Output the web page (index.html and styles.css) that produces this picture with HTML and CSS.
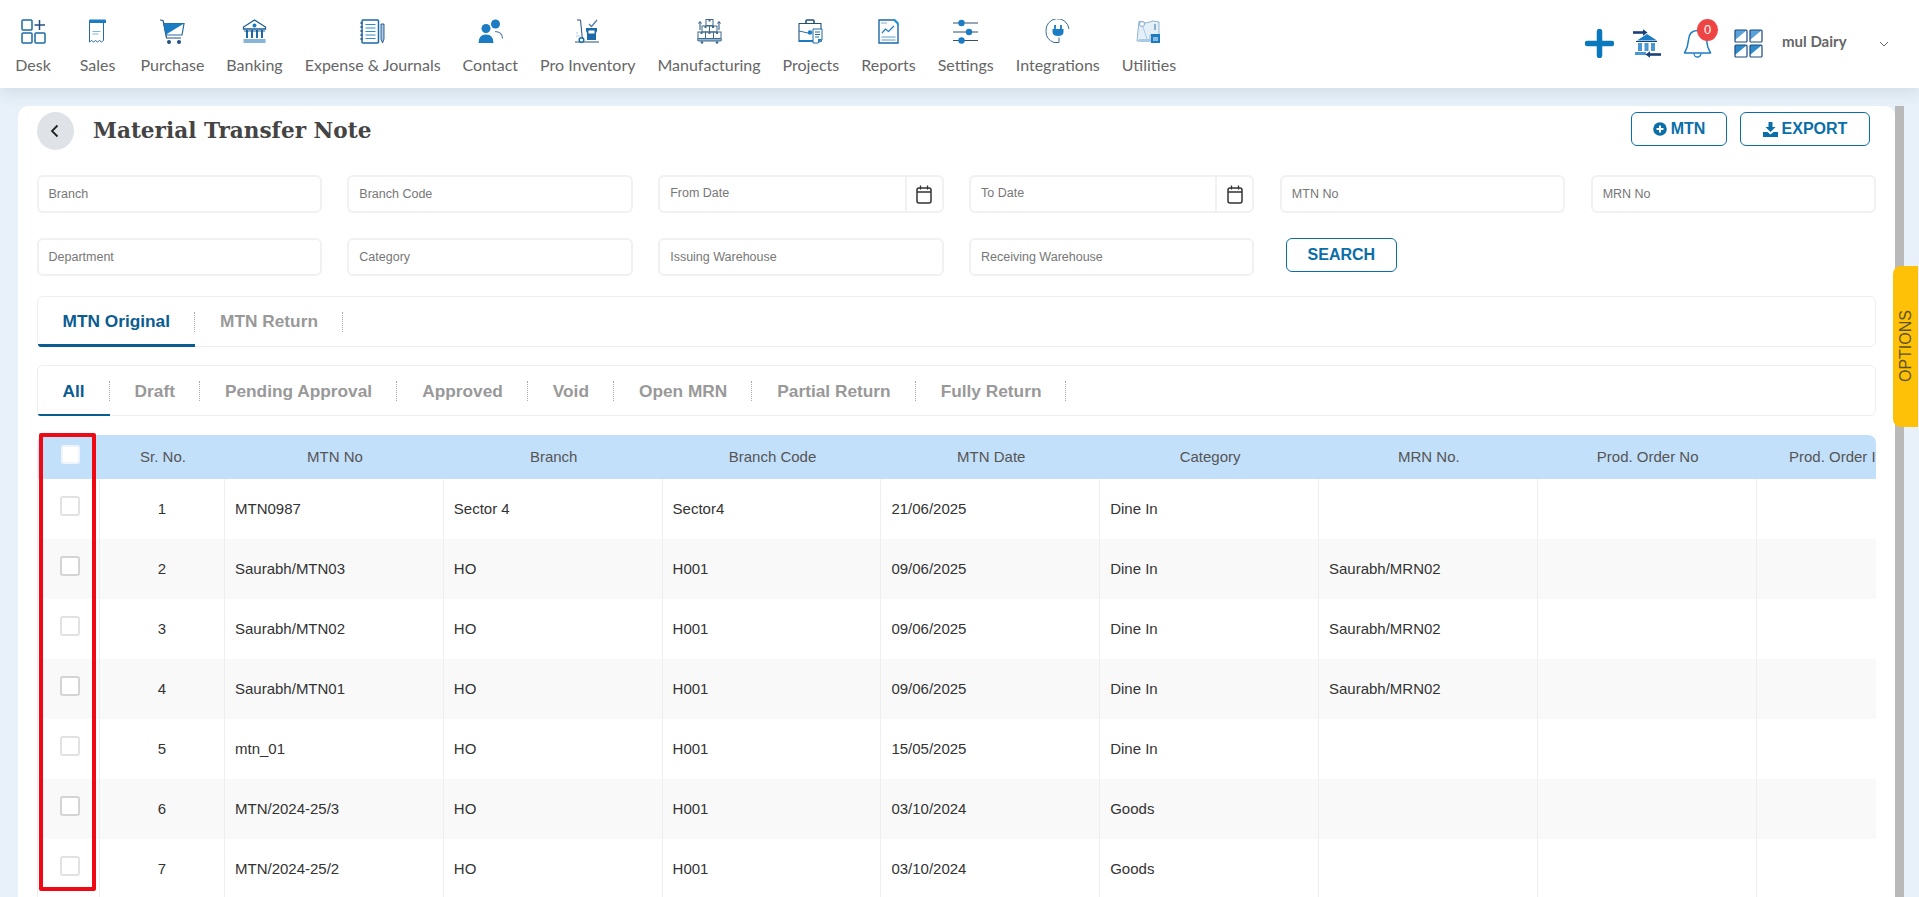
FILE: index.html
```html
<!DOCTYPE html>
<html lang="en">
<head>
<meta charset="utf-8">
<title>Material Transfer Note</title>
<link rel="stylesheet" href="styles.css">
</head>
<body>
<header class="topbar">
  <nav class="nav">
    <a class="nav-item nav-first"><svg class="nav-icon" viewBox="0 0 25 25"><g fill="none" stroke="#1c6aa8" stroke-width="1.5"><rect x="1" y="1" width="10" height="10" rx="1"/><rect x="1" y="14" width="10" height="10" rx="1"/><rect x="14" y="14" width="10" height="10" rx="1"/><path d="M18.500 1v10M13.500 6h10.500" stroke="#24507f"/></g></svg><span>Desk</span></a>
    <a class="nav-item"><svg class="nav-icon" viewBox="0 0 25 25"><path d="M4.500 3v20l2-1.500 2 1.500 2-1.500 2 1.500 2-1.500 2 1.500 2-1.500V3" fill="#fff" stroke="#2a6a9f" stroke-width="1"/><path d="M4 4V1.500Q4 .5 5 .5h15q1 0 1 1V4z" fill="#1b7cc4"/><path d="M7.500 12.500h8M7.500 15h6" stroke="#7fb6de" stroke-width="1.200"/></svg><span>Sales</span></a>
    <a class="nav-item"><svg class="nav-icon" viewBox="0 0 25 25"><path d="M0 1l3 .5L6.500 19H21" fill="none" stroke="#24507f" stroke-width="1.200"/><path d="M4 4.500h20L22 16H6.300z" fill="#fff" stroke="#2a6a9f" stroke-width="1.200"/><path d="M4 4.500h20L6 15.500z" fill="#1b7cc4"/><circle cx="9" cy="23" r="2" fill="#24507f"/><circle cx="19" cy="23" r="2" fill="#24507f"/></svg><span>Purchase</span></a>
    <a class="nav-item"><svg class="nav-icon" viewBox="0 0 25 25"><path d="M12.500 1L1.500 8v2h22V8z" fill="#fff" stroke="#1c5d94" stroke-width="1.300"/><circle cx="12.500" cy="6.500" r="2" fill="#1b7cc4"/><path d="M5 11v8M10 11v8M15 11v8M20 11v8" stroke="#1c6aa8" stroke-width="2"/><path d="M2 12h21" stroke="#1c5d94"/><rect x="1.500" y="20" width="22" height="4" fill="#86b4da"/></svg><span>Banking</span></a>
    <a class="nav-item"><svg class="nav-icon" viewBox="0 0 25 25"><rect x="2" y="1" width="16.500" height="23" rx="1" fill="#fff" stroke="#1c6aa8" stroke-width="1.500"/><path d="M5.500 5.500h10M5.500 9h10M5.500 12.500h10M5.500 16h10M5.500 19.500h10" stroke="#2f8ccb" stroke-width="1.200"/><path d="M0 4h3M0 8h3M0 12h3M0 16h3M0 20h3" stroke="#24507f"/><path d="M21 5h3v15l-1.500 4-1.500-4z" fill="#a9cbe8" stroke="#24507f" stroke-width=".9"/></svg><span>Expense &amp; Journals</span></a>
    <a class="nav-item"><svg class="nav-icon" viewBox="0 0 25 25"><circle cx="17.500" cy="5" r="4.500" fill="#1b7cc4"/><circle cx="8" cy="9.500" r="4.500" fill="#1b7cc4"/><path d="M.5 24q0-8.500 7.500-8.500T15.500 24z" fill="#1b7cc4"/><path d="M17 12.500q7 0 7.500 7" fill="none" stroke="#4a7aa5" stroke-width="1.100"/></svg><span>Contact</span></a>
    <a class="nav-item"><svg class="nav-icon" viewBox="0 0 25 25"><path d="M2 1h3.500l2 20" fill="none" stroke="#24507f"/><path d="M0 23h24" stroke="#24507f"/><circle cx="6.500" cy="21" r="2.300" fill="#fff" stroke="#1b6aa8" stroke-width="1.500"/><path d="M11 9h11v3l-1 2v7H12v-7l-1-2z" fill="#1c6aa8"/><rect x="13.500" y="11.500" width="6" height="3" fill="#fff"/><path d="M14 5l2.500 2.500L22 1" fill="none" stroke="#4a7aa5" stroke-width="1.200"/><path d="M1 17h4M1 14h2" stroke="#a9cbe8"/></svg><span>Pro Inventory</span></a>
    <a class="nav-item"><svg class="nav-icon" viewBox="0 0 25 25"><g fill="none" stroke="#3e6a8e" stroke-width="1"><rect x="9" y=".5" width="7" height="6"/><rect x="5" y="7" width="7.500" height="6"/><rect x="12.500" y="7" width="7.500" height="6"/><rect x="1" y="13" width="7.500" height="6.500"/><rect x="8.500" y="13" width="8" height="6.500"/><rect x="16.500" y="13" width="7.500" height="6.500"/><rect x=".5" y="19.500" width="24" height="2.500" rx="1.200" fill="#8fb4d2"/><path d="M3 11V3M1.500 4.500L3 2.500l1.500 2M22 11V3M20.500 4.500L22 2.500l1.500 2" stroke="#24507f"/></g><circle cx="5" cy="23.500" r="1.300" fill="#3e6a8e"/><circle cx="20" cy="23.500" r="1.300" fill="#3e6a8e"/><path d="M11.500.5h2v2h-2zM7.500 7h2v2h-2zM15 7h2v2h-2zM3.500 13h2v2h-2zM11.500 13h2v2h-2zM19 13h2v2h-2z" fill="#3e6a8e"/></svg><span>Manufacturing</span></a>
    <a class="nav-item"><svg class="nav-icon" viewBox="0 0 25 25"><path d="M8 4V2q0-1 1-1h6q1 0 1 1v2" fill="none" stroke="#24507f" stroke-width="1.600"/><path d="M1 4.500h22v18H1z" fill="#fff" stroke="#24507f" stroke-width="1.100"/><path d="M1 12l9 2M23 12l-8 2" stroke="#2a6a9f"/><circle cx="12" cy="13.500" r="2.200" fill="#1b7cc4"/><path d="M1 21h14v2H1z" fill="#1b7cc4"/><path d="M15 10h9v11l-4 3h-5z" fill="#fff" stroke="#1c6aa8"/><path d="M17 13h5M17 15.500h5M17 18h4" stroke="#1c6aa8"/><path d="M20 24l4-4h-4z" fill="#1b7cc4"/></svg><span>Projects</span></a>
    <a class="nav-item"><svg class="nav-icon" viewBox="0 0 25 25"><path d="M3 1h15l4 4v19H3z" fill="#fff" stroke="#1c6aa8" stroke-width="1.400"/><path d="M5 4h6" stroke="#7fa9cc"/><path d="M6 14l3.500-4 3 2.500L18 7" fill="none" stroke="#1b7cc4" stroke-width="1.200"/><path d="M5.500 18h14M5.500 21h14" stroke="#5a9ccc"/><path d="M17 1h2l3 3v3" fill="none" stroke="#1b9ad6" stroke-width="1.500"/></svg><span>Reports</span></a>
    <a class="nav-item"><svg class="nav-icon" viewBox="0 0 25 25"><path d="M0 4h25M0 13h25M0 21.500h25" stroke="#33506e" stroke-width="1.100"/><circle cx="8.500" cy="4" r="3.200" fill="#1b7cc4"/><circle cx="16" cy="13" r="3.200" fill="#1b7cc4"/><circle cx="8.500" cy="21.500" r="3.200" fill="#1b7cc4"/></svg><span>Settings</span></a>
    <a class="nav-item"><svg class="nav-icon" viewBox="0 0 25 25"><path d="M24 10A11.500 11.500 0 0 0 1 12.500q0 8 8 11h5v-5" fill="none" stroke="#3a6d99" stroke-width="1"/><path d="M10 6v4M16 6v4" stroke="#1b7cc4" stroke-width="1.800"/><path d="M7.500 10h11v3q0 4-5.500 4t-5.500-4z" fill="#1b7cc4"/></svg><span>Integrations</span></a>
    <a class="nav-item"><svg class="nav-icon" viewBox="0 0 25 25"><path d="M3 2l7 2 7-2 6 1v13h-9v6H1z" fill="#e4eff8" stroke="#8fb4d2"/><circle cx="6" cy="5" r="2.500" fill="#fff" stroke="#7fa9cc"/><path d="M19 5v6" stroke="#6f9cc2" stroke-width="1.500"/><path d="M3 20h14v3H3z" fill="#a9cbe8"/><rect x="15" y="15" width="9" height="9" fill="#1b7cc4"/><path d="M17 19h5M17 21h5" stroke="#fff"/><path d="M7 8l4 12" stroke="#a9cbe8"/></svg><span>Utilities</span></a>
  </nav>
  <div class="top-tools">
    <svg class="tool-plus" viewBox="0 0 29 29"><path d="M14.500 2.500v24M2.500 14.500h24" stroke="#0a78bd" stroke-width="5.500" stroke-linecap="round"/></svg>
    <svg class="tool-bank" viewBox="0 0 29 29"><path d="M1 3.500h11" stroke="#1c3f78" stroke-width="2.600"/><path d="M11 .3l4.500 3.200L11 6.700z" fill="#1c3f78"/><path d="M15 5L5 11.500h20z" fill="#1b7cc4"/><path d="M4 12.500h21" stroke="#1c3f78" stroke-width="1"/><path d="M6 14h4v8H6zM12.500 14h4v8h-4zM19 14h4v8h-4z" fill="#4a97d2"/><path d="M3 23h11v3H3z" fill="#4a97d2"/><path d="M17 25.500h12" stroke="#1c3f78" stroke-width="2.600"/><path d="M18 22.300l-4.500 3.200 4.500 3.200z" fill="#1c3f78"/></svg>
    <div class="bell-wrap">
      <svg class="tool-bell" viewBox="0 0 29 29"><path d="M14.500 1.500Q6 1.500 5.500 11 5 18 1.500 24h26Q24 18 23.500 11 23 1.500 14.500 1.500z" fill="none" stroke="#1b7cc4" stroke-width="1.500" stroke-linejoin="round"/><path d="M11 24.500a3.500 3.500 0 0 0 7 0" fill="none" stroke="#1b7cc4" stroke-width="1.300"/></svg>
      <span class="badge">0</span>
    </div>
    <svg class="tool-grid" viewBox="0 0 29 29"><path d="M1 1h12L1 11z" fill="#5aa3da"/><path d="M16 1h12L16 11z" fill="#5aa3da"/><path d="M1 16h12L1 26z" fill="#2f8ccb"/><path d="M16 16h12L16 26z" fill="#2f8ccb"/><g fill="none" stroke="#1c4a80" stroke-width="1.200"><rect x="1" y="1" width="12" height="12" rx="1"/><rect x="16" y="1" width="12" height="12" rx="1"/><rect x="1" y="16" width="12" height="12" rx="1"/><rect x="16" y="16" width="12" height="12" rx="1"/></g></svg>
    <span class="company">mul Dairy</span>
    <svg class="tool-chevron" viewBox="0 0 10 6"><path d="M1 1l4 4 4-4" fill="none" stroke="#666" stroke-width="1"/></svg>
  </div>
</header>

<div class="page">
  <main class="card">
    <div class="title-row">
      <button class="back"><svg viewBox="0 0 12 16"><path d="M8.500 2.500L3 8l5.500 5.500" fill="none" stroke="#222" stroke-width="1.800"/></svg></button>
      <h1 class="title">Material Transfer Note</h1>
      <div class="actions">
        <button class="btn btn-mtn"><svg class="btn-icon" viewBox="0 0 14 14"><circle cx="7" cy="7" r="6.800" fill="#0a6ea8"/><path d="M7 3.500v7M3.500 7h7" stroke="#fff" stroke-width="2"/></svg>MTN</button>
        <button class="btn btn-export"><svg class="btn-icon" viewBox="0 0 15 15"><path d="M5.500 0h4v5h3l-5 5-5-5h3z" fill="#0a6ea8"/><path d="M0 10h4.500l3 2.500 3-2.500H15v5H0z" fill="#0a6ea8"/></svg>EXPORT</button>
      </div>
    </div>

    <form class="filters">
      <input class="field" placeholder="Branch">
      <input class="field" placeholder="Branch Code">
      <div class="date-field"><input class="date-input" placeholder="From Date"><span class="date-addon"><svg viewBox="0 0 16 19"><rect x="1" y="3" width="14" height="15" rx="2" fill="none" stroke="#333" stroke-width="1.500"/><path d="M1 7h14M4.500 .5v4M11.500 .5v4" stroke="#333" stroke-width="1.300"/></svg></span></div>
      <div class="date-field"><input class="date-input" placeholder="To Date"><span class="date-addon"><svg viewBox="0 0 16 19"><rect x="1" y="3" width="14" height="15" rx="2" fill="none" stroke="#333" stroke-width="1.500"/><path d="M1 7h14M4.500 .5v4M11.500 .5v4" stroke="#333" stroke-width="1.300"/></svg></span></div>
      <input class="field" placeholder="MTN No">
      <input class="field" placeholder="MRN No">
      <input class="field" placeholder="Department">
      <input class="field" placeholder="Category">
      <input class="field" placeholder="Issuing Warehouse">
      <input class="field" placeholder="Receiving Warehouse">
      <div class="search-cell"><button type="button" class="btn btn-search">SEARCH</button></div>
    </form>

    <div class="tabs tabs-main">
      <a class="tab active">MTN Original</a>
      <a class="tab">MTN Return</a>
    </div>
    <div class="tabs tabs-sub">
      <a class="tab active">All</a>
      <a class="tab">Draft</a>
      <a class="tab">Pending Approval</a>
      <a class="tab">Approved</a>
      <a class="tab">Void</a>
      <a class="tab">Open MRN</a>
      <a class="tab">Partial Return</a>
      <a class="tab">Fully Return</a>
    </div>

    <div class="table-area">
      <div class="table-clip">
        <table class="grid">
          <colgroup><col class="c-check"><col class="c-sr"><col class="c-data"><col class="c-data"><col class="c-data"><col class="c-data"><col class="c-data"><col class="c-data"><col class="c-data"><col class="c-last"></colgroup>
          <thead>
            <tr><th><input type="checkbox" class="check check-head"></th><th>Sr. No.</th><th>MTN No</th><th>Branch</th><th>Branch Code</th><th>MTN Date</th><th>Category</th><th>MRN No.</th><th>Prod. Order No</th><th>Prod. Order Item No.</th></tr>
          </thead>
          <tbody>
            <tr><td class="cell-check"><input type="checkbox" class="check"></td><td class="cell-sr">1</td><td>MTN0987</td><td>Sector 4</td><td>Sector4</td><td>21/06/2025</td><td>Dine In</td><td></td><td></td><td></td></tr>
            <tr><td class="cell-check"><input type="checkbox" class="check"></td><td class="cell-sr">2</td><td>Saurabh/MTN03</td><td>HO</td><td>H001</td><td>09/06/2025</td><td>Dine In</td><td>Saurabh/MRN02</td><td></td><td></td></tr>
            <tr><td class="cell-check"><input type="checkbox" class="check"></td><td class="cell-sr">3</td><td>Saurabh/MTN02</td><td>HO</td><td>H001</td><td>09/06/2025</td><td>Dine In</td><td>Saurabh/MRN02</td><td></td><td></td></tr>
            <tr><td class="cell-check"><input type="checkbox" class="check"></td><td class="cell-sr">4</td><td>Saurabh/MTN01</td><td>HO</td><td>H001</td><td>09/06/2025</td><td>Dine In</td><td>Saurabh/MRN02</td><td></td><td></td></tr>
            <tr><td class="cell-check"><input type="checkbox" class="check"></td><td class="cell-sr">5</td><td>mtn_01</td><td>HO</td><td>H001</td><td>15/05/2025</td><td>Dine In</td><td></td><td></td><td></td></tr>
            <tr><td class="cell-check"><input type="checkbox" class="check"></td><td class="cell-sr">6</td><td>MTN/2024-25/3</td><td>HO</td><td>H001</td><td>03/10/2024</td><td>Goods</td><td></td><td></td><td></td></tr>
            <tr><td class="cell-check"><input type="checkbox" class="check"></td><td class="cell-sr">7</td><td>MTN/2024-25/2</td><td>HO</td><td>H001</td><td>03/10/2024</td><td>Goods</td><td></td><td></td><td></td></tr>
          </tbody>
        </table>
      </div>
      <div class="annotation"></div>
    </div>
  </main>
  <div class="scrollbar"></div>
</div>
<div class="options-tab"><span>OPTIONS</span></div>
</body>
</html>
```

FILE: styles.css
```css
* { box-sizing: border-box; }
html, body { height: 100%; }
body {
  margin: 0;
  height: 897px;
  overflow: hidden;
  background: #e8f1f9;
  font-family: "Liberation Sans", Arial, sans-serif;
  color: #333;
}
button { font-family: inherit; cursor: pointer; }

/* top bar */
.topbar {
  position: relative;
  z-index: 2;
  height: 88px;
  background: #fff;
  display: flex;
  justify-content: space-between;
  box-shadow: 0 3px 16px rgba(40, 70, 100, .14);
}
.nav { display: flex; padding-left: 0.5px; }
.nav-item {
  min-width: 64px;
  padding: 19px 11px 0;
  display: flex;
  flex-direction: column;
  align-items: center;
  font-family: Lato, sans-serif;
  font-size: 16px;
  line-height: 20px;
  color: #666;
  white-space: nowrap;
}
.nav-first { min-width: 65px; }
.nav-icon { width: 25px; height: 25px; margin-bottom: 11px; display: block; }

.top-tools { display: flex; align-items: flex-start; padding-top: 29px; width: 334px; flex: none; }
.tool-plus { width: 29px; height: 29px; }
.tool-bank { width: 29px; height: 29px; margin-left: 18px; }
.bell-wrap { position: relative; width: 29px; height: 29px; margin-left: 22px; }
.tool-bell { width: 29px; height: 29px; display: block; }
.badge {
  position: absolute;
  left: 14px;
  top: -10px;
  width: 21px;
  height: 22px;
  border-radius: 50%;
  background: #ee4444;
  color: #fff;
  font-size: 13px;
  line-height: 22px;
  text-align: center;
}
.tool-grid { width: 29px; height: 29px; margin-left: 22px; }
.company {
  margin-left: 19px;
  margin-top: 2px;
  font-family: Lato, sans-serif;
  font-weight: 700;
  font-size: 15px;
  line-height: 20px;
  color: #666;
}
.tool-chevron { width: 10px; height: 6px; margin-left: 32px; margin-top: 12px; }

/* page */
.page {
  display: flex;
  padding: 18px 15px 0 18px;
  height: 809px;
}
.card {
  flex: 1;
  min-width: 0;
  background: #fff;
  border-radius: 10px 10px 0 0;
  padding: 6px 19px 0 18.5px;
  overflow: hidden;
}
.scrollbar { width: 9px; flex: none; background: #b9b9b9; }

.title-row { display: flex; align-items: flex-start; height: 38px; }
.back {
  width: 37px;
  height: 38px;
  border: 0;
  padding: 0;
  border-radius: 50%;
  background: #dfe3e8;
  display: flex;
  align-items: center;
  justify-content: center;
}
.back svg { width: 12px; height: 16px; }
.title {
  margin: 4px 0 0 19.5px;
  font-family: "DejaVu Serif", serif;
  font-size: 21.6px;
  line-height: 30px;
  font-weight: 700;
  color: #444;
  white-space: nowrap;
}
.actions { margin-left: auto; margin-right: 6px; display: flex; gap: 13px; }
.btn {
  height: 34px;
  background: #fff;
  border: 1px solid #0a6ea8;
  border-radius: 6px;
  color: #0a6ea8;
  font-weight: 700;
  font-size: 16px;
  padding: 0;
  display: inline-flex;
  align-items: center;
  justify-content: center;
}
.btn-mtn { width: 96px; }
.btn-export { width: 130px; }
.btn-search { width: 111px; }
.btn-icon { margin-right: 4px; flex: none; }
.btn-mtn .btn-icon { width: 14px; height: 14px; }
.btn-export .btn-icon { width: 15px; height: 15px; }

/* filters */
.filters {
  margin-top: 25px;
  display: grid;
  grid-template-columns: repeat(6, 1fr);
  column-gap: 25.5px;
  row-gap: 25px;
}
.field, .date-field {
  height: 38px;
  min-width: 0;
  width: 100%;
  background: #fff;
  border: 2px solid #f1f1f1;
  border-radius: 6px;
}
.field, .date-input {
  font-family: inherit;
  font-size: 12.5px;
  color: #333;
  padding: 0 0 0 10px;
  outline: none;
}
.field::placeholder, .date-input::placeholder { color: #777; opacity: 1; }
.date-field { display: flex; }
.date-input { flex: 1; min-width: 0; border: 0; background: none; padding-bottom: 3px; }
.date-addon {
  width: 37px;
  flex: none;
  border-left: 2px solid #f1f1f1;
  display: flex;
  align-items: center;
  justify-content: center;
}
.date-addon svg { width: 16px; height: 19px; }
.search-cell { padding-left: 6px; }

/* tabs */
.tabs {
  height: 51px;
  border: 1px solid #eeeeee;
  border-radius: 6px;
  display: flex;
  align-items: center;
  margin-top: 20px;
}
.tabs-sub { margin-top: 18px; }
.tab {
  position: relative;
  height: 49px;
  padding: 0 25px;
  display: flex;
  align-items: center;
  font-weight: 700;
  font-size: 17.3px;
  color: #999;
  white-space: nowrap;
}
.tabs-sub .tab { padding-top: 1px; }
.tab::after {
  content: "";
  position: absolute;
  right: 0;
  top: 15px;
  height: 20px;
  border-right: 1px dotted #aaa;
}
.tab.active { color: #0a5c91; }
.tab.active::before {
  content: "";
  position: absolute;
  left: 0;
  right: 0;
  bottom: -1px;
  height: 3px;
  background: #0a5c91;
  border-radius: 0 0 0 3px;
}
.tabs-sub .tab.active::before { height: 2px; }

/* table */
.table-area { position: relative; margin-top: 19px; }
.table-clip {
  overflow: hidden;
  border-radius: 8px 8px 0 0;
  border-left: 1px solid #eeeeee;
}
.grid {
  table-layout: fixed;
  border-collapse: collapse;
  width: 1921.6px;
  font-size: 15px;
}
.c-check { width: 62px; }
.c-sr { width: 125px; }
.c-data { width: 218.8px; }
.c-last { width: 203px; }
.grid th {
  height: 44px;
  background: #c3e0fb;
  color: #555;
  font-weight: 400;
  text-align: center;
  padding: 0 0 2px 2px;
  white-space: nowrap;
}
.grid td {
  height: 60px;
  padding: 0 10px 2px;
  border-right: 1px solid #eeeeee;
  color: #333;
  white-space: nowrap;
}
.grid tbody tr:nth-child(even) td { background: #f9f9f9; }
.grid td.cell-sr { text-align: center; padding: 0 0 2px; }
.grid td.cell-check { padding: 0 0 6px 22px; }
.check {
  appearance: none;
  -webkit-appearance: none;
  display: block;
  margin: 0;
  width: 20px;
  height: 20px;
  background: #fff;
  border: 2px solid #e2e2e2;
  border-radius: 3px;
}
.grid tbody tr:nth-child(even) .check { border-color: #d4d4d4; }
.check-head { width: 19px; height: 19px; border-color: #eef4fa; margin: -3px 0 0 21px; }

.annotation {
  position: absolute;
  left: 2px;
  top: -2px;
  width: 57px;
  height: 458px;
  border: 4px solid #ee0a14;
  border-radius: 2px;
}

.options-tab {
  position: absolute;
  z-index: 3;
  left: 1893px;
  top: 266px;
  width: 25px;
  height: 161px;
  background: #ffc107;
  border-radius: 8px 0 0 8px;
  display: flex;
  align-items: center;
  justify-content: center;
}
.options-tab span {
  writing-mode: vertical-rl;
  transform: rotate(180deg);
  font-size: 16px;
  color: #5b5325;
}
```
